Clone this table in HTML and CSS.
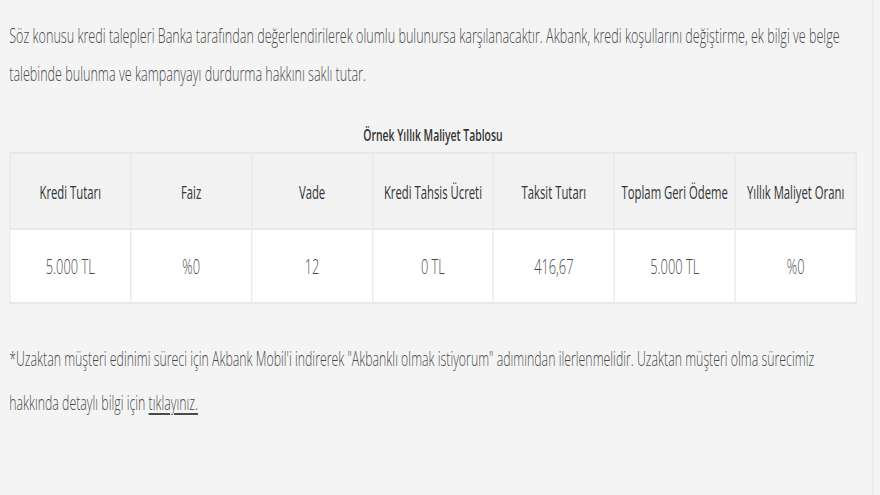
FILE: index.html
```html
<!DOCTYPE html>
<html lang="tr">
<head>
<meta charset="utf-8">
<title>Örnek Yıllık Maliyet Tablosu</title>
<link rel="stylesheet" href="styles.css">
</head>
<body>
<div class="frame">
<div class="page">
  <p class="intro">Söz konusu kredi talepleri Banka tarafından değerlendirilerek olumlu bulunursa karşılanacaktır. Akbank, kredi koşullarını değiştirme, ek bilgi ve belge talebinde bulunma ve kampanyayı durdurma hakkını saklı tutar.</p>
  <div class="caption">Örnek Yıllık Maliyet Tablosu</div>
  <table class="cost">
    <thead>
      <tr>
        <th>Kredi Tutarı</th>
        <th>Faiz</th>
        <th>Vade</th>
        <th>Kredi Tahsis Ücreti</th>
        <th>Taksit Tutarı</th>
        <th>Toplam Geri Ödeme</th>
        <th>Yıllık Maliyet Oranı</th>
      </tr>
    </thead>
    <tbody>
      <tr>
        <td>5.000 TL</td>
        <td>%0</td>
        <td>12</td>
        <td>0 TL</td>
        <td>416,67</td>
        <td>5.000 TL</td>
        <td>%0</td>
      </tr>
    </tbody>
  </table>
  <p class="note">*Uzaktan müşteri edinimi süreci için Akbank Mobil'i indirerek "Akbanklı olmak istiyorum" adımından ilerlenmelidir. Uzaktan müşteri olma sürecimiz hakkında detaylı bilgi için <a href="#" class="link">tıklayınız.</a></p>
</div>
</div>
</body>
</html>
```

FILE: styles.css
```css
html, body {
  margin: 0;
  padding: 0;
  background: #f4f4f4;
  overflow: hidden;
  height: 100%;
}

.frame {
  width: 880px;
  height: 495px;
  overflow: hidden;
}

.page {
  box-sizing: border-box;
  width: 1429px;
  min-height: 495px;
  padding: 16px 25px 0 15px;
  border-right: 2px solid #e9e9e9;
  transform: scaleX(0.6111);
  transform-origin: 0 0;
  font-family: "Open Sans", "Noto Sans", sans-serif;
  color: #4a4a4a;
  font-size: 20.2px;
  font-weight: 300;
}

.intro {
  margin: 0;
  font-size: 20.6px;
  line-height: 38px;
}

.caption {
  margin-top: 31px;
  text-align: center;
  font-size: 17px;
  font-weight: 600;
  line-height: 24px;
  color: #333;
  margin-bottom: 5px;
}

.cost {
  width: 100%;
  border-collapse: collapse;
  table-layout: fixed;
  border: 2px solid #e8e8e8;
}

.cost th,
.cost td {
  border: 2px solid #e8e8e8;
  text-align: center;
  padding: 0 6px;
}

.cost th {
  height: 74px;
  background: #f2f2f2;
  font-size: 18.5px;
  font-weight: 400;
  color: #333;
}

.cost td {
  height: 72px;
  background: #fff;
  font-size: 21px;
  font-weight: 300;
  color: #4a4a4a;
}

.note {
  margin: 32px 0 0;
  line-height: 44px;
}

.link {
  color: inherit;
  text-decoration: underline;
  text-underline-offset: 3px;
}
```
